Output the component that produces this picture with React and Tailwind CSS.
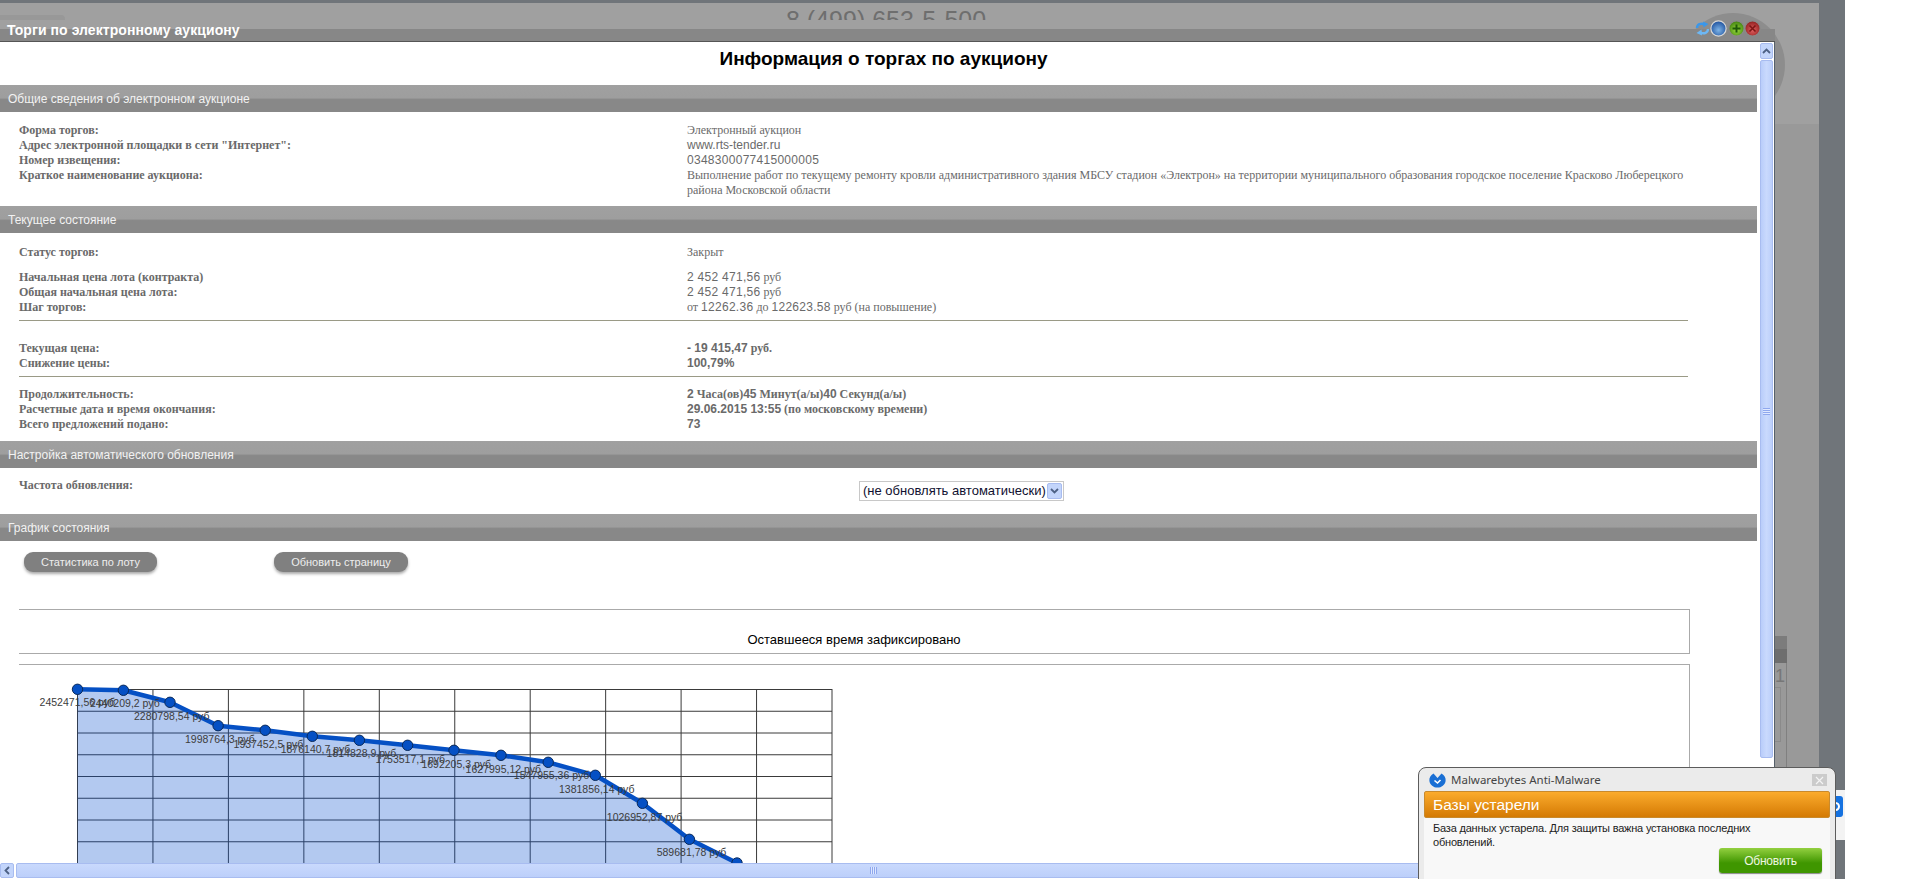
// Торги по аукциону — modal over a dimmed page, chart in inline svg

const points = [
  [77.5, 689.3], [123.4, 690.3], [170, 702.3], [218.1, 725.7], [265.2, 730.3],
  [312.3, 736.3], [359.4, 740.3], [407.6, 745.3], [454, 750.3], [501, 755.3],
  [548.2, 762.3], [595.3, 775.3], [642.4, 803.3], [689.4, 839.3], [737, 863], [784, 900],
];

const labels = [
  ["2452471,56 руб", 39.6, 702], ["2440209,2 руб", 90, 703], ["2280798,54 руб", 134, 716],
  ["1998764,3 руб", 185, 739], ["1937452,5 руб", 233.6, 744], ["1876140,7 руб", 280.7, 749],
  ["1814828,9 руб", 326.6, 753], ["1753517,1 руб", 375.4, 759], ["1692205,3 руб", 421.4, 764],
  ["1627995,12 руб", 465.6, 769], ["1547955,36 руб", 513.8, 775], ["1381856,14 руб", 559, 789],
  ["1026952,87 руб", 606.8, 817], ["589681,78 руб", 656.7, 852],
];

const gridX = Array.from({ length: 11 }, (_, i) => 77.5 + i * 75.45);
const gridY = Array.from({ length: 9 }, (_, i) => 689.5 + i * 21.75);

// digits and latin came out in a sans face on the original page, cyrillic in serif
const N = ({ children }) => <span className="font-['Liberation_Sans',sans-serif]">{children}</span>;
const D = ({ children }) => <span className="font-['Liberation_Sans',sans-serif] tracking-[0.28px]">{children}</span>;

const SectionBar = ({ children }) => (
  <div className="flex h-[27px] shrink-0 items-center bg-[linear-gradient(#a0a0a0_0,#9e9e9e_48%,#959595_50%,#888888_54%,#888888_100%)] pl-2 pt-px font-['Liberation_Sans',sans-serif] text-xs text-[#f2f2f2]">
    {children}
  </div>
);

const Row = ({ label, children, className = "" }) => (
  <div className={`grid grid-cols-[668px_1fr] text-xs leading-[15px] text-[#6a6a6a] ${className}`}>
    <div className="font-bold">{label}</div>
    <div>{children}</div>
  </div>
);

const Ball = ({ from, to, ring, children }) => (
  <svg width="17" height="17" viewBox="0 0 17 17" className="block">
    <defs>
      <radialGradient id={`b${from.slice(1)}`} cx="50%" cy="60%" r="60%">
        <stop offset="0" stopColor={from} />
        <stop offset="1" stopColor={to} />
      </radialGradient>
    </defs>
    <circle cx="8.5" cy="8.5" r="7.6" fill={`url(#b${from.slice(1)})`} stroke={ring} strokeWidth="1.2" />
    {children}
  </svg>
);

const RefreshIcon = () => (
  <svg width="15" height="15" viewBox="0 0 15 15" className="mr-[-1px] block">
    <path d="M2 7 C2 3.5 6 1.5 9.5 3.5" fill="none" stroke="#3a97ea" strokeWidth="2.4" />
    <path d="M8 0.5 L13.5 3 L8.5 6.5 Z" fill="#3a97ea" />
    <path d="M13 8 C13 11.5 9 13.5 5.5 11.5" fill="none" stroke="#6db8f5" strokeWidth="2.4" />
    <path d="M7 14.5 L1.5 12 L6.5 8.5 Z" fill="#6db8f5" />
  </svg>
);

const Chart = () => (
  <svg viewBox="19 665 860 200" className="block h-[200px] w-[860px] font-['Liberation_Sans',sans-serif]">
    {gridY.map((y) => (
      <line key={y} x1="77.5" x2="832" y1={y} y2={y} stroke="#3a3a3a" />
    ))}
    {gridX.map((x) => (
      <line key={x} x1={x} x2={x} y1="689" y2="870" stroke="#3a3a3a" />
    ))}
    <polygon
      points={`${points.map((p) => p.join(",")).join(" ")} 784,900 77.5,900`}
      fill="#0a50d0"
      fillOpacity="0.31"
    />
    <polyline
      points={points.map((p) => p.join(",")).join(" ")}
      fill="none"
      stroke="#0550c4"
      strokeWidth="4.5"
      strokeLinejoin="round"
    />
    {points.map(([x, y]) => (
      <circle key={x} cx={x} cy={y} r="5.2" fill="#0550c4" stroke="#0a2a5a" strokeWidth="1" />
    ))}
    {labels.map(([text, x, y]) => (
      <text key={text} x={x} y={y + 4} fontSize="10.5" fill="#3c3c3c">
        {text}
      </text>
    ))}
  </svg>
);

const MalwarebytesPopup = () => (
  <div className="absolute left-[1418px] top-[767px] h-[120px] w-[418px] rounded-t-[8px] border border-[#5c5c5c] bg-[#ebebeb] font-['Liberation_Sans',sans-serif]">
    <div className="flex h-[23px] items-center pl-[10px] pr-2 pt-px">
      <svg width="17" height="15" viewBox="0 0 17 15" className="mr-[5px] block shrink-0">
        <path d="M4.5 0.5 L8.5 5 L12.5 0.5 C15.5 2 17 5 16.6 8 C16 12 12.5 14.6 8.5 14.6 C4.5 14.6 1 12 0.4 8 C0 5 1.5 2 4.5 0.5 Z" fill="#1a6fd4" />
        <path d="M5.5 7.5 L8.5 10 L11.5 7" fill="none" stroke="#ffffff" strokeWidth="1.6" />
      </svg>
      <span className="font-['Noto_Sans',sans-serif] text-[11.5px] text-[#444444]">Malwarebytes Anti-Malware</span>
      <div className="ml-auto flex h-3 w-[15px] items-center justify-center bg-[#cbcbcb] text-[#f4f4f4]">
        <svg width="9" height="9" viewBox="0 0 9 9">
          <path d="M1 1 L8 8 M8 1 L1 8" stroke="currentColor" strokeWidth="1.2" />
        </svg>
      </div>
    </div>
    <div className="mx-[5px] flex h-[27px] items-center rounded-[2px] border border-[#c98a2c] bg-[linear-gradient(#fbab2c,#d47a04)] pl-2 text-[15.5px] text-white">
      Базы устарели
    </div>
    <div className="mx-[5px] h-[80px] bg-[#f8f8f8] px-[9px] pt-[3px] text-[11px] leading-[14px] tracking-[-0.2px] text-[#222222]">
      <p className="w-[345px]">База данных устарела. Для защиты важна установка последних обновлений.</p>
      <div className="ml-[286px] mt-[-1px] flex h-[25px] w-[103px] items-center justify-center rounded-[3px] bg-[linear-gradient(#93d040,#3f9600_60%)] text-xs text-[#eef6e0] shadow-[0_1px_1px_#888]">
        Обновить
      </div>
    </div>
  </div>
);

const VerticalScrollbar = () => (
  <div className="flex w-[17px] shrink-0 flex-col gap-px border-r border-[#56606a] bg-white pl-[2px] pr-px pt-px">
    <div className="flex h-[16px] items-center justify-center rounded-[2px] border border-[#a8bcf0] bg-[#c3d5fb] text-[#4d6185]">
      <svg width="9" height="6" viewBox="0 0 9 6">
        <path d="M1 5 L4.5 1.5 L8 5" fill="none" stroke="currentColor" strokeWidth="1.8" />
      </svg>
    </div>
    <div className="flex h-[698px] flex-col items-center rounded-[2px] border border-[#a8bcf0] bg-[linear-gradient(90deg,#b9cdfa,#c9d9fd_50%,#bccffa)] pt-[347px]">
      <div className="h-[7px] w-[7px] bg-[repeating-linear-gradient(#8fa8ee_0,#8fa8ee_1px,#dfe8ff_1px,#dfe8ff_2px)]" />
    </div>
  </div>
);

const HorizontalScrollbar = () => (
  <div className="flex h-[16px] shrink-0 gap-[2px] bg-white pb-px">
    <div className="flex w-[14px] items-center justify-center rounded-[2px] border border-[#a8bcf0] bg-[#c3d5fb] text-[#4d6185]">
      <svg width="6" height="9" viewBox="0 0 6 9">
        <path d="M5 1 L1.5 4.5 L5 8" fill="none" stroke="currentColor" strokeWidth="1.8" />
      </svg>
    </div>
    <div className="flex flex-1 items-center rounded-[2px] border border-[#a8bcf0] bg-[linear-gradient(#c9d9fd,#bccffa)] pl-[853px]">
      <div className="h-[7px] w-[7px] bg-[repeating-linear-gradient(90deg,#8fa8ee_0,#8fa8ee_1px,#dfe8ff_1px,#dfe8ff_2px)]" />
    </div>
  </div>
);

export default function App() {
  return (
    <div className="relative h-[879px] w-[1920px] overflow-hidden bg-white font-['Liberation_Sans',sans-serif]">
      <div className="flex h-full w-[1845px] flex-col bg-[#70757a] pr-[26px] pt-[3px]">
        <div className="relative flex flex-1 flex-col overflow-hidden bg-[#a0a0a0]">
          {/* dimmed page behind the modal */}
          <div className="absolute left-[1681px] top-[10px] h-[104px] w-[104px] rounded-full bg-[#8d8d8d]" />
          <div className="absolute left-0 top-[12px] h-[5px] w-[65px] rounded-tr-[4px] bg-[#989898]" />
          <div className="absolute left-[786px] top-[3px] h-[14px] overflow-hidden text-[25px] leading-[28px] text-[#6e6e6e]">
            8 (499) 653-5-500
          </div>

          <div className="relative flex h-[39px] shrink-0 flex-col justify-end">
            <div className="h-[13px] w-[1775px] border-b border-[#555555] bg-[#878787]" />
            <div className="absolute left-[7px] top-[18px] text-sm font-bold leading-[18px] tracking-[0.07px] text-white">
              Торги по электронному аукциону
            </div>
            <div className="absolute left-[1695px] top-[17px] flex items-center gap-px">
              <RefreshIcon />
              <Ball from="#7fb4e6" to="#1c4f9c" ring="#d8d8d8" />
              <Ball from="#9bdc3c" to="#3f7f10" ring="#8a8a8a">
                <path d="M8.5 4.5 V12.5 M4.5 8.5 H12.5" stroke="#1f5a08" strokeWidth="2" />
              </Ball>
              <div className="ml-[-2px]">
                <Ball from="#e06060" to="#8f1c1c" ring="#8a8a8a">
                  <path d="M5.5 5.5 L11.5 11.5 M11.5 5.5 L5.5 11.5" stroke="#7d1515" strokeWidth="1.6" />
                </Ball>
              </div>
            </div>
          </div>

          <div className="relative flex min-h-0 flex-1">
            <div className="flex w-[1775px] shrink-0 flex-col">
              <div className="flex min-h-0 flex-1">
                <div className="h-full w-[1758px] shrink-0 overflow-hidden bg-white font-['Liberation_Serif',serif]">
                  <div className="w-[1757px]">
                    <h1 className="flex h-[43px] items-center justify-center pb-[9px] pl-[10px] font-['Liberation_Sans',sans-serif] text-[19px] font-bold text-black">
                      Информация о торгах по аукциону
                    </h1>

                    <SectionBar>Общие сведения об электронном аукционе</SectionBar>
                    <div className="h-[94px] pl-[19px] pr-[60px] pt-[11px]">
                      <Row label="Форма торгов:">Электронный аукцион</Row>
                      <Row label={'Адрес электронной площадки в сети "Интернет":'}><N>www.rts-tender.ru</N></Row>
                      <Row label="Номер извещения:"><D>0348300077415000005</D></Row>
                      <Row label="Краткое наименование аукциона:">
                        <p className="w-[1003px]">
                          Выполнение работ по текущему ремонту кровли административного здания МБСУ стадион «Электрон» на территории муниципального образования городское поселение Красково Люберецкого района Московской области
                        </p>
                      </Row>
                    </div>

                    <SectionBar>Текущее состояние</SectionBar>
                    <div className="h-[208px] pl-[19px] pr-[69px] pt-[12px]">
                      <Row label="Статус торгов:">Закрыт</Row>
                      <Row label="Начальная цена лота (контракта)" className="mt-[10px]"><D>2 452 471,56</D> руб</Row>
                      <Row label="Общая начальная цена лота:"><D>2 452 471,56</D> руб</Row>
                      <Row label="Шаг торгов:">от <D>12262.36</D> до <D>122623.58</D> руб (на повышение)</Row>
                      <div className="mt-[5px] h-px bg-[#9a9a86]" />
                      <Row label="Текущая цена:" className="mt-[20px] font-bold"><N>- 19 415,47</N> руб.</Row>
                      <Row label="Снижение цены:" className="font-bold"><N>100,79%</N></Row>
                      <div className="mt-[5px] h-px bg-[#9a9a86]" />
                      <Row label="Продолжительность:" className="mt-[10px] font-bold"><N>2</N> Часа(ов)<N>45</N> Минут(а/ы)<N>40</N> Секунд(а/ы)</Row>
                      <Row label="Расчетные дата и время окончания:" className="font-bold"><N>29.06.2015 13:55</N> (по московскому времени)</Row>
                      <Row label="Всего предложений подано:" className="font-bold"><N>73</N></Row>
                    </div>

                    <SectionBar>Настройка автоматического обновления</SectionBar>
                    <div className="flex h-[46px] pl-[19px] pt-[10px]">
                      <div className="w-[840px] text-xs font-bold leading-[15px] text-[#6a6a6a]">Частота обновления:</div>
                      <div className="mt-[3px] flex h-[20px] w-[205px] items-center border border-[#c8c8c8] pl-[3px] pr-px font-['Liberation_Sans',sans-serif] text-[13px] text-[#101030]">
                        <span>(не обновлять автоматически)</span>
                        <div className="ml-auto flex h-[16px] w-[15px] items-center justify-center rounded-[2px] border border-[#a8bcf0] bg-[#c3d5fb] text-[#4d6185]">
                          <svg width="9" height="6" viewBox="0 0 9 6">
                            <path d="M1 1 L4.5 4.5 L8 1" fill="none" stroke="currentColor" strokeWidth="1.8" />
                          </svg>
                        </div>
                      </div>
                    </div>

                    <SectionBar>График состояния</SectionBar>
                    <div className="pl-[19px] pr-[67px] pt-[11px] font-['Liberation_Sans',sans-serif]">
                      <div className="flex gap-[117px] pl-[5px]">
                        <div className="flex h-[20px] w-[133px] items-center justify-center rounded-[9px] bg-[#808080] text-[11px] text-[#eeeeee] shadow-[0_2px_3px_#aaa]">Статистика по лоту</div>
                        <div className="flex h-[20px] w-[134px] items-center justify-center rounded-[9px] bg-[#808080] text-[11px] text-[#eeeeee] shadow-[0_2px_3px_#aaa]">Обновить страницу</div>
                      </div>
                      <div className="mt-[37px] flex h-[45px] items-center justify-center border-y border-r border-[#aaaaaa] pt-[16px] text-[13px] text-black">
                        Оставшееся время зафиксировано
                      </div>
                      <div className="mt-[10px] h-[220px] border-r border-t border-[#aaaaaa]">
                        <Chart />
                      </div>
                    </div>
                  </div>
                </div>
                <VerticalScrollbar />
              </div>
              <HorizontalScrollbar />
            </div>

            {/* right strip of the page behind */}
            <div className="relative flex-1 bg-[#999999] pt-[594px]">
              <div className="absolute left-0 top-0 h-[82px] w-full overflow-hidden bg-[#a0a0a0]">
                <div className="ml-[-94px] mt-[-29px] h-[104px] w-[104px] rounded-full bg-[#8d8d8d]" />
              </div>
              <div className="h-[27px] w-[12px] bg-[linear-gradient(#7c7c7c,#7c7c7c_50%,#6e6e6e_50%)]" />
              <div className="h-[140px] w-[12px] border-r border-[#808080] pt-[2px] text-[18px] leading-[22px] text-[#777777]">
                1
                <div className="h-[55px] w-[6px] border-y border-r border-[#8a8a8a]" />
              </div>
            </div>
          </div>
        </div>
      </div>

      {/* tray leftovers beside the popup */}
      <div className="absolute left-[1836px] top-[790px] h-[50px] w-[9px] bg-[#f3f3f3]">
        <div className="mt-[6px] flex h-[21px] w-[7px] items-center overflow-hidden rounded-r-[3px] bg-[#1672e0]">
          <div className="ml-[-5px] h-[9px] w-[9px] shrink-0 rounded-full border-2 border-white" />
        </div>
      </div>
      <MalwarebytesPopup />
    </div>
  );
}
